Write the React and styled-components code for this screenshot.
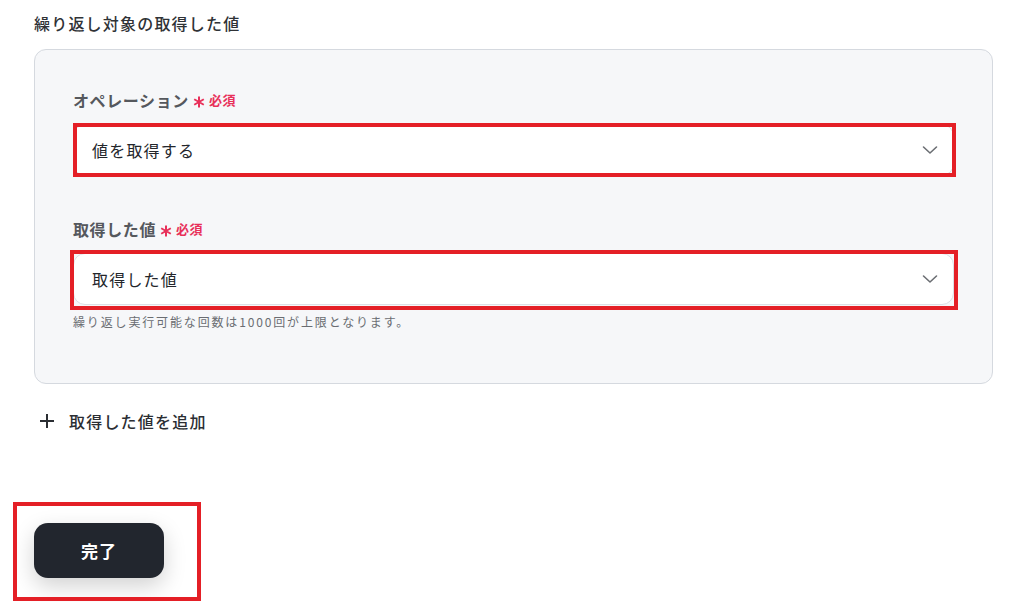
import styled, { createGlobalStyle } from 'styled-components';

const GlobalStyle = createGlobalStyle`
    body {
        margin: 0;
        background: #ffffff;
        font-family: "Noto Sans CJK JP", "Noto Sans", sans-serif;
        color: #2b2e33;
    }
`

function Chevron() {
    return (
        <svg width="16" height="10" viewBox="0 0 16 10" fill="none">
            <path d="M1.5 2 L8 8 L14.5 2" stroke="#6b6e73" strokeWidth="1.6" strokeLinecap="round" strokeLinejoin="round" />
        </svg>
    )
}

function PlusIcon() {
    return (
        <svg width="18" height="18" viewBox="0 0 18 18" fill="none">
            <path d="M9 2 V16 M2 9 H16" stroke="#2b2e33" strokeWidth="2" />
        </svg>
    )
}

function AsteriskIcon() {
    return (
        <svg width="12" height="12" viewBox="0 0 12 12" fill="none">
            <path d="M6 0.5 V11.5 M1.2 3.25 L10.8 8.75 M1.2 8.75 L10.8 3.25" stroke="#e8305a" strokeWidth="2" />
        </svg>
    )
}

function Field({ label, value, mark, hint }) {
    return (
        <FieldWrapper>
            <Label>
                {label}
                <Asterisk><AsteriskIcon /></Asterisk>
                <Required>必須</Required>
            </Label>
            <Marked $inset={mark}>
                <Select>
                    <span>{value}</span>
                    <Chevron />
                </Select>
            </Marked>
            {hint && <Hint>{hint}</Hint>}
        </FieldWrapper>
    )
}

export default function App() {
    return (
        <Page>
            <GlobalStyle />
            <Title>繰り返し対象の取得した値</Title>
            <Panel>
                <Field
                    label="オペレーション"
                    value="値を取得する"
                    mark="-1px -2px -1px 0"
                />
                <Field
                    label="取得した値"
                    value="取得した値"
                    mark="-3px -4px -5px -3px"
                    hint="繰り返し実行可能な回数は1000回が上限となります。"
                />
            </Panel>
            <AddRow>
                <PlusIcon />
                取得した値を追加
            </AddRow>
            <ButtonArea $inset="-21px -37px -23px -21px">
                <DoneButton>完了</DoneButton>
            </ButtonArea>
        </Page>
    )
}

const Page = styled.div`
    padding: 11px 39px 40px 34px;
    display: flex;
    flex-direction: column;
    align-items: flex-start;
`

const Title = styled.h2`
    margin: 0;
    font-size: 16px;
    line-height: 24px;
    font-weight: 500;
    letter-spacing: 1.2px;
    color: #2f3236;
`

const Panel = styled.div`
    align-self: stretch;
    margin-top: 14px;
    padding: 38px 38px 52px;
    background: #f6f7f9;
    border: 1px solid #d5d9df;
    border-radius: 12px;
    display: flex;
    flex-direction: column;
    gap: 41px;
`

const FieldWrapper = styled.div`
    display: flex;
    flex-direction: column;
`

const Label = styled.div`
    display: flex;
    align-items: center;
    font-size: 16px;
    line-height: 24px;
    font-weight: 700;
    letter-spacing: 0.6px;
    color: #55585d;
    margin-bottom: 12px;
`

const Asterisk = styled.span`
    display: flex;
    margin-left: 4px;
    transform: translateY(2px);
`

const Required = styled.span`
    margin-left: 4px;
    font-size: 13px;
    font-weight: 700;
    letter-spacing: 0.5px;
    color: #e8305a;
`

const Marked = styled.div`
    position: relative;

    &::after {
        content: "";
        position: absolute;
        inset: ${p => p.$inset};
        border: 4px solid #e41f26;
        pointer-events: none;
    }
`

const ButtonArea = styled(Marked)`
    margin-top: 90px;
`

const Select = styled.div`
    height: 52px;
    box-sizing: border-box;
    display: flex;
    align-items: center;
    justify-content: space-between;
    padding: 0 15px 0 18px;
    background: #ffffff;
    border: 1px solid #dcdfe4;
    border-radius: 12px;
    font-size: 16px;
    letter-spacing: 1.2px;
    color: #23262b;
`

const Hint = styled.div`
    margin-top: 8px;
    font-size: 12px;
    line-height: 18px;
    letter-spacing: 1.85px;
    color: #6a6d72;
`

const AddRow = styled.div`
    margin-top: 25px;
    display: flex;
    align-items: center;
    gap: 13px;
    padding-left: 4px;
    font-size: 16px;
    line-height: 24px;
    font-weight: 500;
    letter-spacing: 1.2px;
    color: #2b2e33;
`

const DoneButton = styled.button`
    display: block;
    width: 130px;
    height: 55px;
    border: none;
    border-radius: 14px;
    background: #22262e;
    color: #ffffff;
    font-family: inherit;
    font-size: 17px;
    font-weight: 700;
    letter-spacing: 1px;
    box-shadow: 0 8px 22px rgba(0, 0, 0, 0.18);
    cursor: pointer;
`
